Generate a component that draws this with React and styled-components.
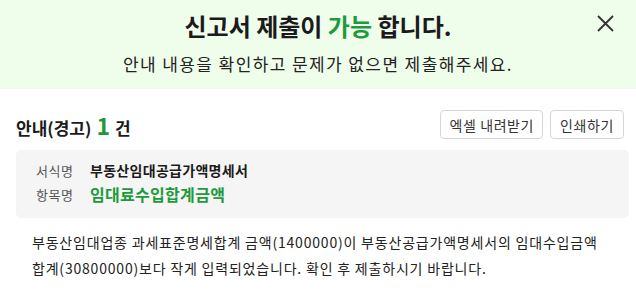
import React from "react"
import styled, { createGlobalStyle } from "styled-components"

const GlobalStyle = createGlobalStyle`
  body {
    margin: 0;
    background: #ffffff;
    font-family: "Noto Sans CJK KR", "Noto Sans", sans-serif;
    color: #222;
  }
`

const Page = styled.div`
  width: 636px;
  height: 298px;
  overflow: hidden;
  background: #fff;
`

const Banner = styled.div`
  position: relative;
  height: 89px;
  background: #effdeb;
  display: flex;
  flex-direction: column;
  align-items: center;
  box-sizing: border-box;
  padding-top: 10px;
`

const Title = styled.h1`
  margin: 0;
  font-size: 24px;
  line-height: 32px;
  font-weight: 700;
  color: #1b1b1b;
`

const Accent = styled.span`
  color: #1e9a3c;
`

const Subtitle = styled.p`
  margin: 10px 0 0;
  font-size: 17px;
  line-height: 24px;
  letter-spacing: 1.4px;
  color: #222;
`

const CloseButton = styled.button`
  position: absolute;
  top: 14px;
  right: 21px;
  width: 19px;
  height: 19px;
  padding: 0;
  border: none;
  background: none;
  cursor: pointer;
  display: flex;
`

const Content = styled.div`
  padding: 0 7px 0 16px;
`

const Toolbar = styled.div`
  margin-top: 21px;
  height: 29px;
  display: flex;
  align-items: center;
  justify-content: space-between;
`

const Heading = styled.h2`
  margin: 0;
  font-size: 17px;
  font-weight: 700;
  color: #1b1b1b;
  display: flex;
  align-items: baseline;
  gap: 5px;
`

const Count = styled.span`
  font-size: 23px;
  color: #1e9a3c;
`

const Actions = styled.div`
  display: flex;
  gap: 7px;
  margin-right: 5px;
`

const Button = styled.button`
  height: 29px;
  padding: 0 ${p => p.$pad}px;
  border: 1px solid #d6d6d6;
  border-radius: 4px;
  background: #fff;
  font-family: inherit;
  font-size: 14px;
  letter-spacing: 0.6px;
  color: #333;
  cursor: pointer;
`

const InfoBox = styled.div`
  margin-top: 11px;
  background: #f5f5f5;
  border-radius: 5px;
  padding: 8px 20px 12px;
`

const InfoRow = styled.div`
  display: flex;
  align-items: center;
  height: 24px;
  gap: 15px;
`

const Label = styled.span`
  width: 39px;
  flex: none;
  font-size: 13px;
  letter-spacing: 0.6px;
  white-space: nowrap;
  color: #555;
`

const Value = styled.span`
  font-size: ${p => (p.$accent ? 16 : 14)}px;
  letter-spacing: 0.3px;
  font-weight: 700;
  color: ${p => (p.$accent ? "#1e9a3c" : "#1b1b1b")};
`

const Message = styled.p`
  margin: 11px 0 0;
  padding-left: 16px;
  padding-right: 0;
  max-width: 578px;
  font-size: 14px;
  line-height: 26px;
  letter-spacing: 0.8px;
  color: #222;
`

const CloseIcon = () => (
  <svg width="19" height="19" viewBox="0 0 19 19">
    <path d="M2 2 L17 17 M17 2 L2 17" stroke="#333" strokeWidth="1.8" />
  </svg>
)

export default function App() {
  return (
    <Page>
      <GlobalStyle />
      <Banner>
        <Title>
          신고서 제출이 <Accent>가능</Accent> 합니다.
        </Title>
        <Subtitle>안내 내용을 확인하고 문제가 없으면 제출해주세요.</Subtitle>
        <CloseButton aria-label="닫기">
          <CloseIcon />
        </CloseButton>
      </Banner>
      <Content>
        <Toolbar>
          <Heading>
            안내(경고) <Count>1</Count> 건
          </Heading>
          <Actions>
            <Button $pad={8}>엑셀 내려받기</Button>
            <Button $pad={9}>인쇄하기</Button>
          </Actions>
        </Toolbar>
        <InfoBox>
          <InfoRow>
            <Label>서식명</Label>
            <Value>부동산임대공급가액명세서</Value>
          </InfoRow>
          <InfoRow>
            <Label>항목명</Label>
            <Value $accent>임대료수입합계금액</Value>
          </InfoRow>
        </InfoBox>
        <Message>
          부동산임대업종 과세표준명세합계 금액(1400000)이 부동산공급가액명세서의 임대수입금액
          합계(30800000)보다 작게 입력되었습니다. 확인 후 제출하시기 바랍니다.
        </Message>
      </Content>
    </Page>
  )
}
